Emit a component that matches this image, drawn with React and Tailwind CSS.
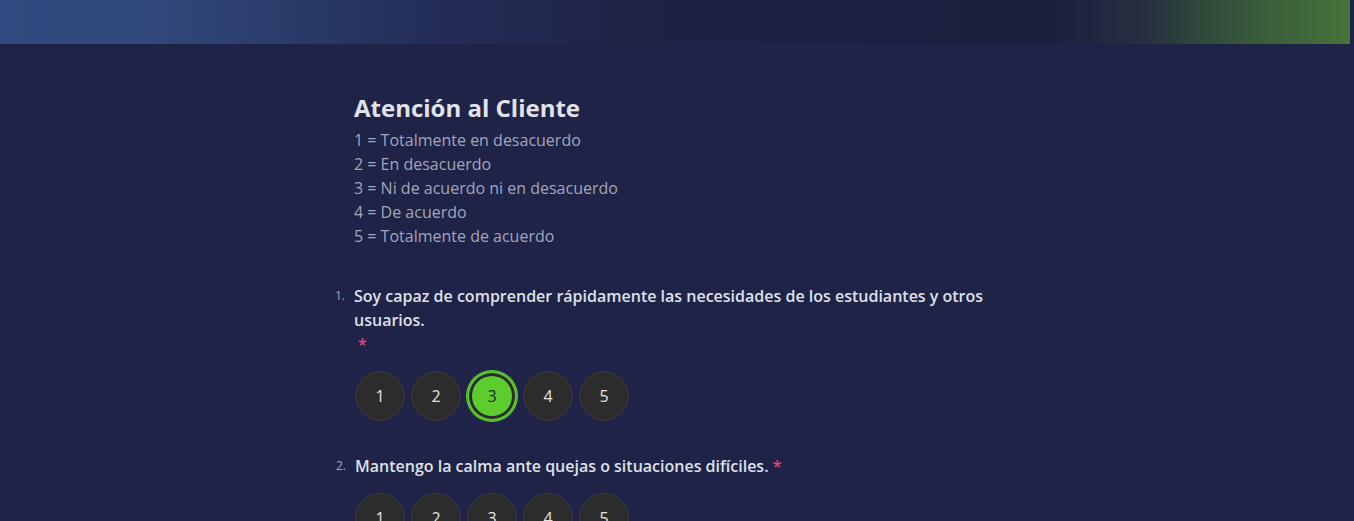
import { useState } from "react";

const questions = [
  {
    id: 1,
    text: "Soy capaz de comprender rápidamente las necesidades de los estudiantes y otros usuarios.",
    breakStar: true,
  },
  { id: 2, text: "Mantengo la calma ante quejas o situaciones difíciles.", breakStar: false },
];

function Scale({ value, onChange }) {
  return (
    <div className="flex gap-[6px] pl-[1px]">
      {[1, 2, 3, 4, 5].map((n) =>
        n === value ? (
          <button
            key={n}
            onClick={() => onChange(n)}
            className="w-[50px] h-[50px] rounded-full bg-[#5ccc2f] text-[#1c2a16] text-[16px] flex items-center justify-center shadow-[0_0_0_1px_#5ccc2f,inset_0_0_0_2px_#5ccc2f,inset_0_0_0_5px_#2c2c2c]"
          >
            {n}
          </button>
        ) : (
          <button
            key={n}
            onClick={() => onChange(n)}
            className="w-[50px] h-[50px] rounded-full bg-[#2c2c2c] border border-[#3a3b40] text-[#e2e2e2] text-[16px] flex items-center justify-center"
          >
            {n}
          </button>
        )
      )}
    </div>
  );
}

export default function App() {
  const [answers, setAnswers] = useState({ 1: 3, 2: null });

  return (
    <div className="min-h-screen bg-[#1e2347] font-['Open_Sans',sans-serif] overflow-hidden">
      <div className="h-[44px] flex">
        <div className="flex-1 bg-[linear-gradient(90deg,#304b80_0%,#2f4879_12%,#232d58_32%,#1e2142_50%,#1d1f3f_78%,#263040_85%,#2f4a3a_89%,#3a5f3a_94%,#46733a_100%)]" />
        <div className="w-[4px] bg-[#1e2347]" />
      </div>

      <div className="w-[646px] mx-auto pt-[48px]">
        <h1 className="text-[24px] leading-[32px] font-bold text-[#e2e3ea]">Atención al Cliente</h1>
        <div className="mt-[4px] text-[16px] leading-[24px] text-[#a3a6ba]">
          <p>1 = Totalmente en desacuerdo</p>
          <p>2 = En desacuerdo</p>
          <p>3 = Ni de acuerdo ni en desacuerdo</p>
          <p>4 = De acuerdo</p>
          <p>5 = Totalmente de acuerdo</p>
        </div>

        <div className="mt-[36px] flex flex-col gap-[33px]">
          {questions.map((q) => (
            <div key={q.id}>
              <div className="flex">
                <span className="-ml-[20px] w-[20px] pr-[8px] text-right text-[12px] leading-[24px] text-[#a9acc0]">
                  {q.id}.
                </span>
                <p className="pl-[1px] text-[16px] leading-[24px] font-semibold text-[#dfe0e8]">
                  {q.text}
                  {q.breakStar ? (
                    <span className="block pl-[4px] text-[#e8437a]">*</span>
                  ) : (
                    <span className="text-[#e8437a]"> *</span>
                  )}
                </p>
              </div>
              <div className="mt-[15px]">
                <Scale
                  value={answers[q.id]}
                  onChange={(n) => setAnswers({ ...answers, [q.id]: n })}
                />
              </div>
            </div>
          ))}
        </div>
      </div>
    </div>
  );
}
